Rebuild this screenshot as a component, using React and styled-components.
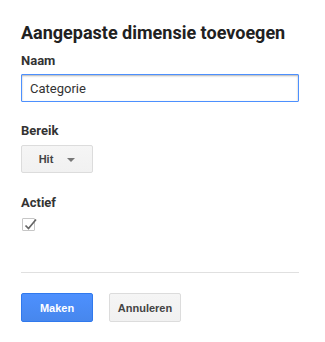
import React from 'react';
import styled, { createGlobalStyle } from 'styled-components';

const GlobalStyle = createGlobalStyle`
  html, body {
    margin: 0;
    padding: 0;
    background: #fff;
  }
  * {
    box-sizing: border-box;
  }
`;

const Page = styled.div`
  width: 325px;
  padding: 22px 26px 20px 21px;
  font-family: Roboto, 'Liberation Sans', Arial, sans-serif;
  color: #222;
`;

const Title = styled.h1`
  margin: 0 0 10px;
  font-size: 18px;
  font-weight: 700;
  line-height: normal;
  color: #212121;
`;

const Field = styled.div`
  display: flex;
  flex-direction: column;
  align-items: flex-start;
  margin-bottom: ${p => p.$gap || 0}px;
`;

const Label = styled.label`
  font-size: 13px;
  font-weight: 700;
  line-height: normal;
  color: #333;
  margin-bottom: ${p => p.$gap || 6}px;
`;

const TextInput = styled.input`
  width: 100%;
  height: 28px;
  padding: 0 8px;
  border: 1px solid #4d90fe;
  border-radius: 1px;
  box-shadow: inset 0 1px 2px rgba(0, 0, 0, 0.3);
  font-family: Roboto, 'Liberation Sans', Arial, sans-serif;
  font-size: 13px;
  color: #333;
  outline: none;
`;

const GrayButton = styled.button`
  display: inline-flex;
  align-items: center;
  justify-content: center;
  gap: 14px;
  width: 72px;
  height: 28px;
  padding: 0;
  border: 1px solid #dcdcdc;
  border-radius: 2px;
  background: linear-gradient(#f5f5f5, #f1f1f1);
  font-family: 'Liberation Sans', Arial, sans-serif;
  font-size: 11px;
  font-weight: 700;
  color: #444;
`;

const Caret = styled.span`
  width: 0;
  height: 0;
  border-left: 4px solid transparent;
  border-right: 4px solid transparent;
  border-top: 4px solid #777;
  margin-top: 1px;
`;

const CheckBox = styled.span`
  position: relative;
  display: block;
  width: 13px;
  height: 13px;
  margin-left: 1px;
  border: 1px solid #c6c6c6;
  border-radius: 1px;
  background: #fff;

  svg {
    position: absolute;
    left: 0;
    top: -2px;
  }
`;

const Divider = styled.hr`
  margin: 41px 0 20px;
  border: 0;
  border-top: 1px solid #e0e0e0;
`;

const Actions = styled.div`
  display: flex;
  gap: 16px;
`;

const ActionButton = styled.button`
  width: 72px;
  height: 29px;
  padding: 0;
  border-radius: 2px;
  font-family: 'Liberation Sans', Arial, sans-serif;
  font-size: 11px;
  font-weight: 700;
  border: 1px solid ${p => (p.$primary ? '#3079ed' : '#dcdcdc')};
  background: ${p =>
    p.$primary ? 'linear-gradient(#4d90fe, #4787ed)' : 'linear-gradient(#f5f5f5, #f1f1f1)'};
  color: ${p => (p.$primary ? '#fff' : '#444')};
`;

export default function App() {
  return (
    <Page>
      <GlobalStyle />
      <Title>Aangepaste dimensie toevoegen</Title>

      <Field $gap={21}>
        <Label>Naam</Label>
        <TextInput defaultValue="Categorie" />
      </Field>

      <Field $gap={22}>
        <Label $gap={7}>Bereik</Label>
        <GrayButton>
          Hit <Caret />
        </GrayButton>
      </Field>

      <Field>
        <Label $gap={8}>Actief</Label>
        <CheckBox>
          <svg width="15" height="15" viewBox="0 0 15 15">
            <path d="M2.5 8.5 L5.5 11.5 L13 2.5" fill="none" stroke="#666" strokeWidth="1.7" />
          </svg>
        </CheckBox>
      </Field>

      <Divider />

      <Actions>
        <ActionButton $primary>Maken</ActionButton>
        <ActionButton>Annuleren</ActionButton>
      </Actions>
    </Page>
  );
}
